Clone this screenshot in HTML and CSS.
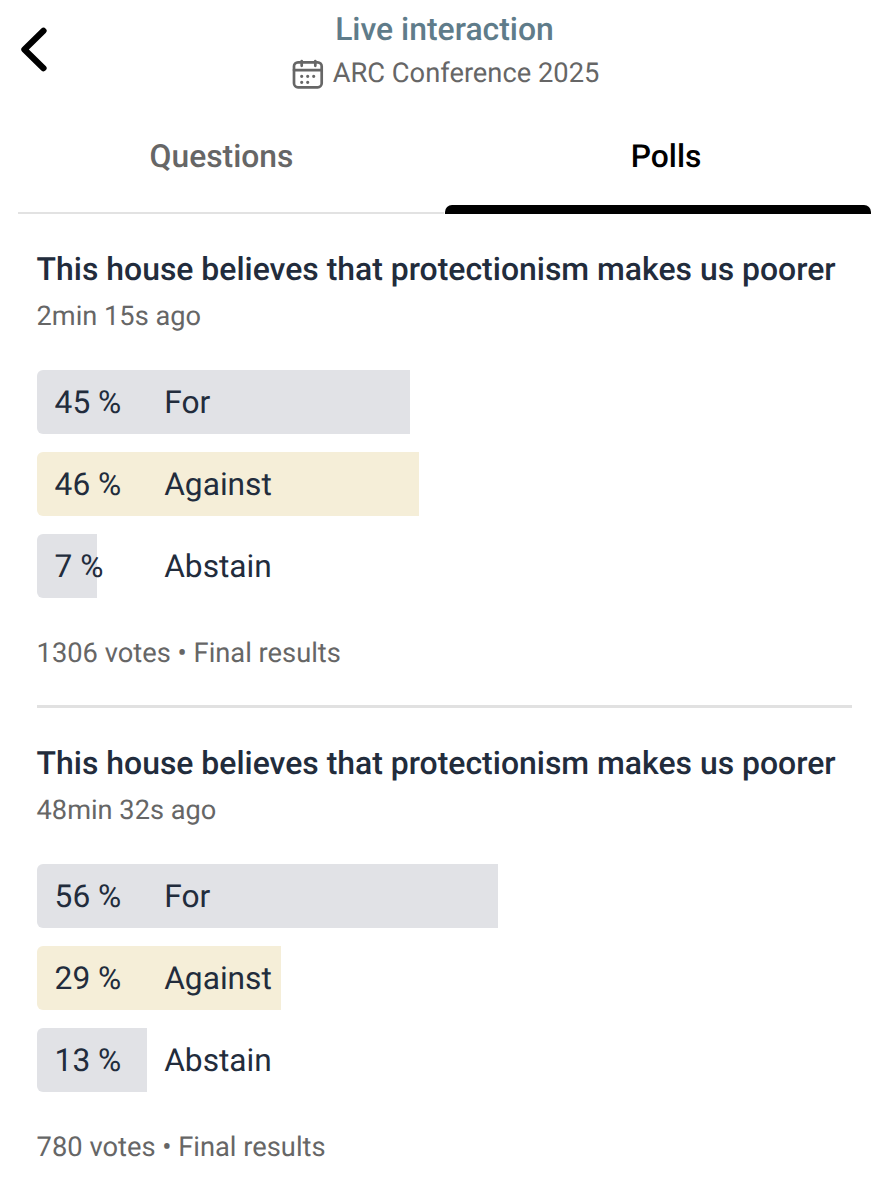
FILE: index.html
```html
<!DOCTYPE html>
<html lang="en">
<head>
<meta charset="utf-8">
<title>Live interaction</title>
<link rel="stylesheet" href="styles.css">
</head>
<body>
<header class="header">
  <svg class="back" viewBox="0 0 30 46" width="30" height="46"><path d="M23.500 4.800 4.400 23.500 23.500 42.200" fill="none" stroke="#000" stroke-width="6.200" stroke-linecap="round" stroke-linejoin="round"/></svg>
  <div class="heading">
    <h1 class="title">Live interaction</h1>
    <div class="event">
      <svg class="calendar" viewBox="0 0 32 32" width="32" height="32" fill="none" stroke="#666" stroke-width="2.700" stroke-linecap="round"><rect x="2" y="4.300" width="27.700" height="25" rx="4"/><path d="M2 12.100h27.700M9.700 3v4.800M23.300 3v4.800"/><path d="M9.700 18.300h.01M15.700 18.300h.01M21.700 18.300h.01M9.700 24.300h.01M15.700 24.300h.01" stroke-width="3.200"/></svg>
      <span class="event-name">ARC Conference 2025</span>
    </div>
  </div>
</header>
<nav class="tabs">
  <a class="tab">Questions</a>
  <a class="tab active">Polls</a>
</nav>
<main class="polls">
  <section class="poll">
    <h2 class="question">This house believes that protectionism makes us poorer</h2>
    <p class="time">2min 15s ago</p>
    <div class="options">
      <div class="option" style="width:373.7px"><span class="percent">45 %</span><span class="label">For</span></div>
      <div class="option chosen" style="width:382.2px"><span class="percent">46 %</span><span class="label">Against</span></div>
      <div class="option" style="width:60.2px"><span class="percent">7 %</span><span class="label">Abstain</span></div>
    </div>
    <p class="votes">1306 votes • Final results</p>
  </section>
  <section class="poll">
    <h2 class="question">This house believes that protectionism makes us poorer</h2>
    <p class="time">48min 32s ago</p>
    <div class="options">
      <div class="option" style="width:461.300px"><span class="percent">56 %</span><span class="label">For</span></div>
      <div class="option chosen" style="width:244.600px"><span class="percent">29 %</span><span class="label">Against</span></div>
      <div class="option" style="width:110.200px"><span class="percent">13 %</span><span class="label">Abstain</span></div>
    </div>
    <p class="votes">780 votes • Final results</p>
  </section>
</main>
</body>
</html>
```
FILE: styles.css
```css
* { box-sizing: border-box; }
body { margin: 0; height: 1182px; overflow: hidden; background: #fff; font-family: Roboto, sans-serif; color: #222c3c; text-rendering: geometricPrecision; }
h1, h2, p { margin: 0; white-space: nowrap; }
.header { display: grid; grid-template-columns: 60px 1fr 60px; height: 111px; }
.back { margin: 26px 0 0 20px; }
.heading { display: flex; flex-direction: column; align-items: center; padding-top: 10px; }
.title { font-size: 31.9px; line-height: 38px; font-weight: 500; color: #5f7c8a; }
.event { display: flex; align-items: center; gap: 9px; height: 48px; margin-top: 1px; padding-left: 2px; }
.calendar { margin-top: 2px; }
.event-name { font-size: 27.3px; line-height: 34px; color: #666; }
.tabs { display: grid; grid-template-columns: 426px 427px; margin: 0 18px; height: 103px; }
.tab { display: flex; justify-content: center; padding: 26px 19px 0 0; font-size: 31.8px; line-height: 38px; font-weight: 500; color: #666; border-bottom: 2px solid #e2e2e2; white-space: nowrap; }
.tab.active { position: relative; margin-left: 1px; padding: 26px 0 0 16px; color: #000; border-bottom: 0; }
.tab.active::after { content: ""; position: absolute; inset: auto 0 0; height: 9px; background: #000; border-radius: 7px 7px 0 0; }
.polls { padding: 0 36.6px; }
.poll { height: 494px; padding-top: 36px; border-bottom: 3px solid #e1e1e1; }
.poll:last-child { border: 0; }
.question { font-size: 31.93px; line-height: 38px; font-weight: 500; }
.time { margin-top: 11px; font-size: 27.2px; line-height: 34px; color: #666; }
.options { display: grid; gap: 18px; margin-top: 37.4px; }
.option { display: flex; align-items: center; height: 64px; padding-left: 18px; background: #e1e2e6; border-radius: 6px 0 0 6px; font-size: 31.7px; white-space: nowrap; }
.option.chosen { background: #f5eed8; }
.percent { flex: 0 0 109.6px; }
.votes { margin-top: 37.600px; font-size: 27.3px; line-height: 34px; color: #666; }
```
